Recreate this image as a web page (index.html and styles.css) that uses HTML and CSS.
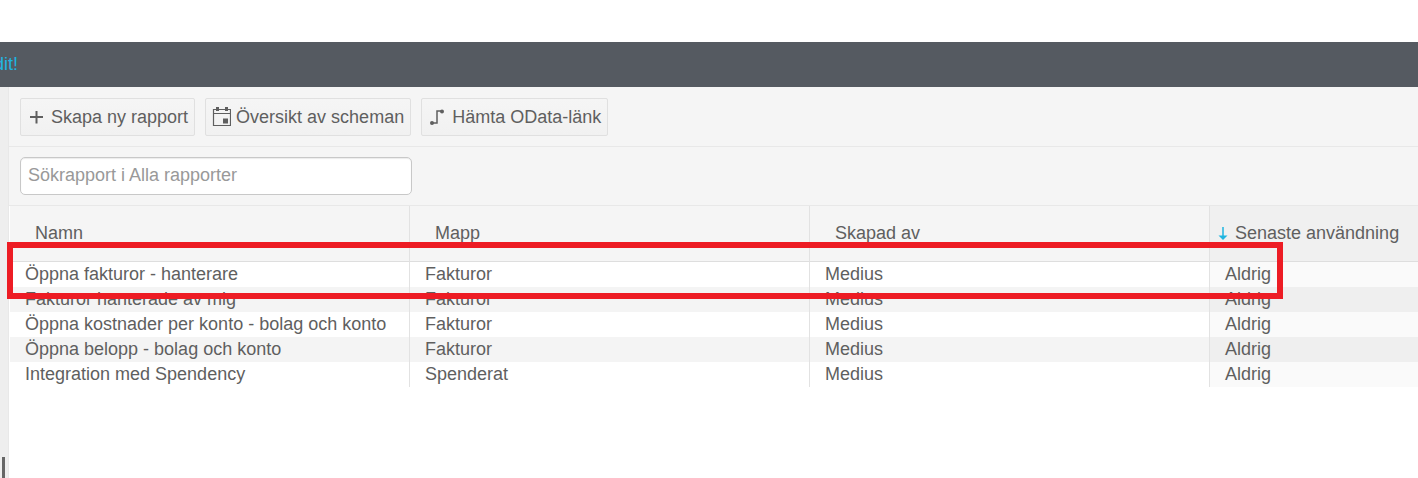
FILE: index.html
```html
<!DOCTYPE html>
<html lang="sv">
<head>
    <meta charset="UTF-8">
    <meta name="viewport" content="width=device-width, initial-scale=1.0">
    <title>Rapporter</title>
    <link rel="stylesheet" href="styles.css">
</head>
<body>
    <header class="topbar">
        <a class="topbar-link" href="#">dit!</a>
    </header>
    <div class="layout">
        <aside class="sidebar">
            <div class="sidebar-thumb"></div>
        </aside>
        <main class="content">
            <div class="toolbar">
                <button type="button" class="btn">
                    <svg class="icon" viewBox="0 0 20 20">
                        <path d="M4 10h13M10.500 4v12.500" fill="none" stroke="#5f5f5f" stroke-width="2"/>
                    </svg>
                    Skapa ny rapport
                </button>
                <button type="button" class="btn">
                    <svg class="icon" viewBox="0 0 20 20">
                        <path d="M2.500 2.500h17v16h-17zM2.500 6.500h17" fill="none" stroke="#5f5f5f" stroke-width="1.200"/>
                        <path d="M5 0h3v4H5zM14 0h3v4h-3zM12 11.500h5v5h-5z" fill="#5f5f5f"/>
                    </svg>
                    Översikt av scheman
                </button>
                <button type="button" class="btn">
                    <svg class="icon" viewBox="0 0 20 20">
                        <path d="M4.500 16H10V4h5" fill="none" stroke="#5f5f5f" stroke-width="1.500"/>
                        <circle cx="5" cy="16" r="2" fill="#5f5f5f"/>
                        <circle cx="15" cy="4.500" r="2" fill="#5f5f5f"/>
                    </svg>
                    Hämta OData-länk
                </button>
            </div>
            <div class="search-row">
                <input class="search" type="text" placeholder="Sökrapport i Alla rapporter" aria-label="Sökrapport i Alla rapporter">
            </div>
            <div class="table-wrap">
                <table class="reports">
                    <thead>
                        <tr>
                            <th>Namn</th>
                            <th>Mapp</th>
                            <th>Skapad av</th>
                            <th class="sorted">
                                <svg class="sort-icon" viewBox="0 0 10 14">
                                    <path d="M5 0v10" fill="none" stroke="#1fb5e0" stroke-width="1.500"/>
                                    <path d="M0.500 8.500h9L5 13z" fill="#1fb5e0"/>
                                </svg>
                                Senaste användning
                            </th>
                        </tr>
                    </thead>
                    <tbody>
                        <tr>
                            <td>Öppna fakturor - hanterare</td>
                            <td>Fakturor</td>
                            <td>Medius</td>
                            <td class="sorted">Aldrig</td>
                        </tr>
                        <tr>
                            <td>Fakturor hanterade av mig</td>
                            <td>Fakturor</td>
                            <td>Medius</td>
                            <td class="sorted">Aldrig</td>
                        </tr>
                        <tr>
                            <td>Öppna kostnader per konto - bolag och konto</td>
                            <td>Fakturor</td>
                            <td>Medius</td>
                            <td class="sorted">Aldrig</td>
                        </tr>
                        <tr>
                            <td>Öppna belopp - bolag och konto</td>
                            <td>Fakturor</td>
                            <td>Medius</td>
                            <td class="sorted">Aldrig</td>
                        </tr>
                        <tr>
                            <td>Integration med Spendency</td>
                            <td>Spenderat</td>
                            <td>Medius</td>
                            <td class="sorted">Aldrig</td>
                        </tr>
                    </tbody>
                </table>
                <div class="highlight"></div>
            </div>
        </main>
    </div>
</body>
</html>
```
FILE: styles.css
```css
* {
    box-sizing: border-box;
}

body {
    margin: 0;
    padding-top: 42px;
    min-height: 100vh;
    display: flex;
    flex-direction: column;
    background: #fff;
    color: #5f5f5f;
    font-family: "Liberation Sans", Arial, sans-serif;
    font-size: 18px;
    line-height: 25px;
    overflow-x: hidden;
}

.topbar {
    display: flex;
    align-items: center;
    height: 45px;
    background: #555a61;
}

.topbar-link {
    margin-left: -6px;
    color: #1fb5e0;
    text-decoration: none;
}

.layout {
    display: flex;
    flex: 1;
}

.sidebar {
    display: flex;
    flex-direction: column;
    justify-content: flex-end;
    width: 9px;
    padding-left: 2px;
    background: #eee;
    border-right: 1px solid #e8e8e8;
}

.sidebar-thumb {
    width: 3px;
    height: 21px;
    background: #666;
}

.content {
    flex: 1;
    min-width: 0;
}

/* Toolbar */
.toolbar,
.search-row {
    display: flex;
    gap: 10px;
    padding: 10px 11px;
    background: #f5f5f5;
    border-bottom: 1px solid #e8e8e8;
}

.toolbar {
    padding-top: 11px;
}

.btn {
    display: flex;
    align-items: center;
    gap: 5px;
    height: 38px;
    padding: 0 6px 0 5px;
    border: 1px solid #e0e0e0;
    border-radius: 2px;
    background: linear-gradient(#f5f5f5, #f1f1f1);
    color: inherit;
    font: inherit;
    white-space: nowrap;
}

.icon {
    width: 20px;
    height: 20px;
}

.search {
    width: 392px;
    height: 38px;
    padding: 0 7px 2px;
    border: 1px solid #c8c8c8;
    border-radius: 5px;
    background: #fff;
    box-shadow: inset 0 1px 1px rgba(0, 0, 0, 0.08);
    color: inherit;
    font: inherit;
}

.search::placeholder {
    color: #999;
    opacity: 1;
}

/* Report list */
.table-wrap {
    position: relative;
    padding-left: 1px;
}

.reports {
    width: 100%;
    table-layout: fixed;
    border-collapse: separate;
    border-spacing: 0;
}

.reports th,
.reports td {
    width: 400px;
    border-right: 1px solid #e2e2e2;
    text-align: left;
    white-space: nowrap;
}

.reports th {
    height: 56px;
    padding: 0 0 0 25px;
    background: #f5f5f5;
    border-bottom: 1px solid #dedede;
    font-weight: normal;
}

.reports td {
    height: 25px;
    padding: 0 15px;
}

.reports tr:nth-child(even) td {
    background: #f4f4f4;
}

.reports th.sorted,
.reports td.sorted {
    width: auto;
    border-right: none;
}

.reports th.sorted {
    padding-left: 8px;
    background: #f0f0f0;
}

.reports td.sorted {
    background: #fafafa;
}

.reports tr:nth-child(even) td.sorted {
    background: #efefef;
}

.sort-icon {
    width: 10px;
    height: 14px;
    margin-right: 2px;
    vertical-align: -2px;
}

/* Marker round the first report */
.highlight {
    position: absolute;
    top: 36px;
    left: -2px;
    width: 1276px;
    height: 57px;
    border: 6px solid #ed1c24;
    pointer-events: none;
}
```
